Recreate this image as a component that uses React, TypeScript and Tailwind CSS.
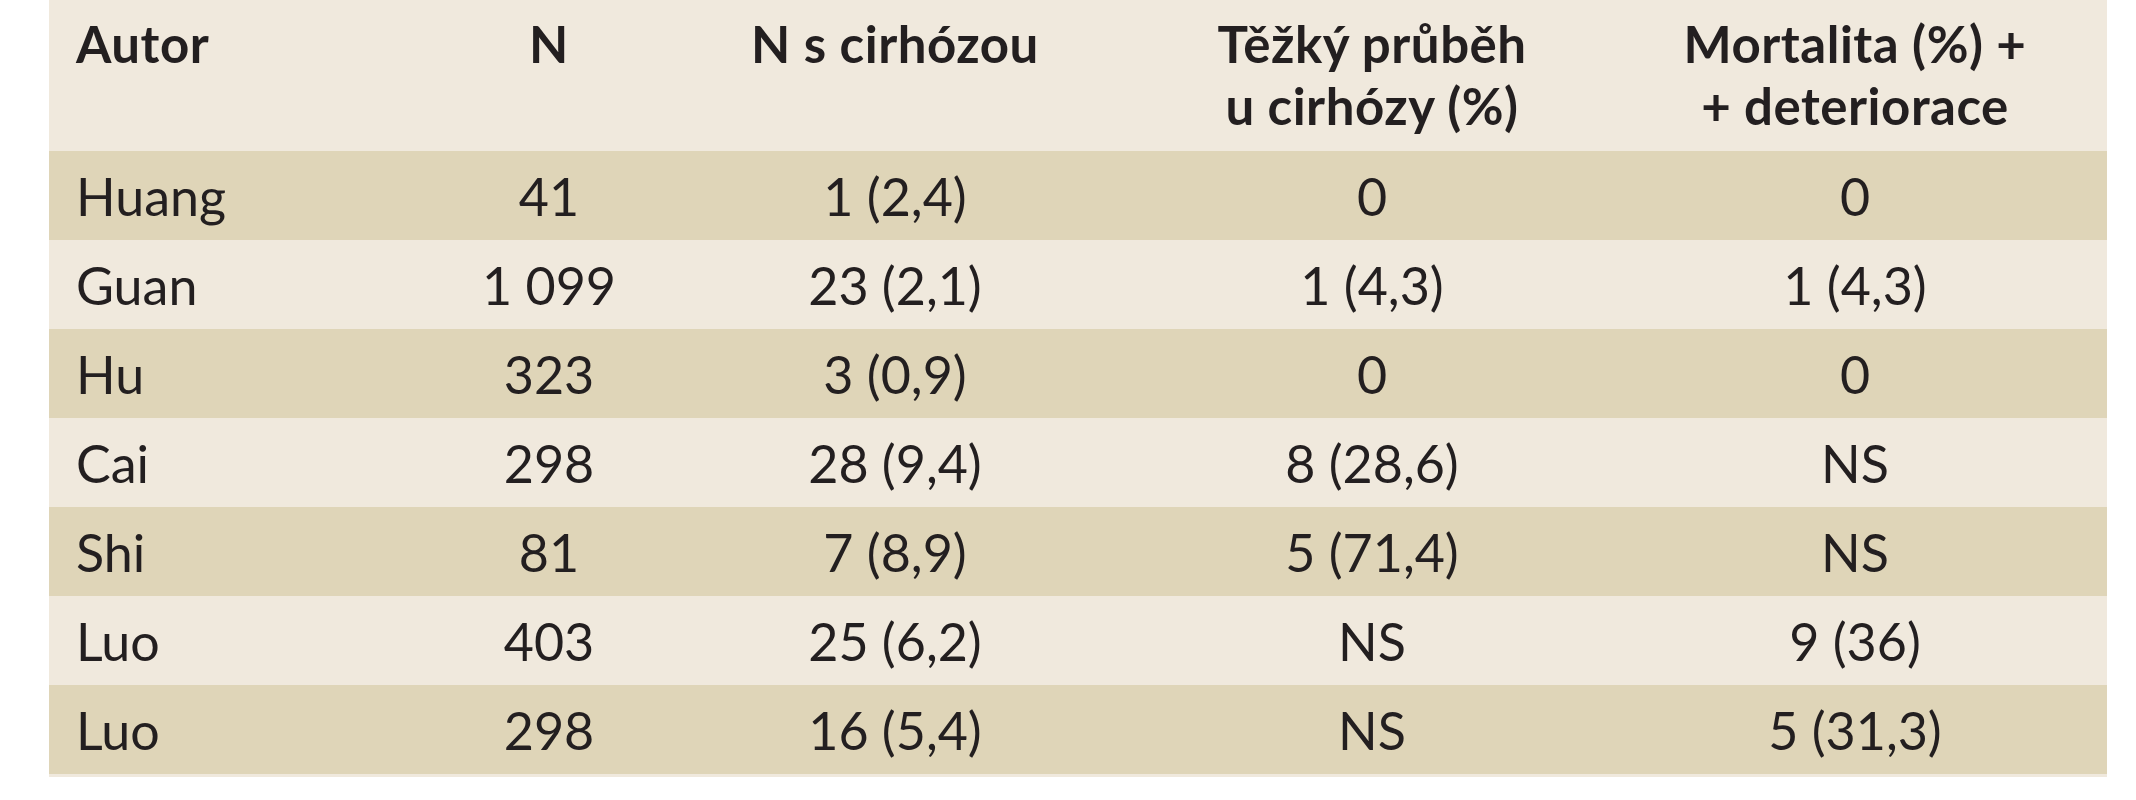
import React from "react";

const rows: string[][] = [
  ["Huang", "41", "1 (2,4)", "0", "0"],
  ["Guan", "1\u00a0099", "23 (2,1)", "1 (4,3)", "1 (4,3)"],
  ["Hu", "323", "3 (0,9)", "0", "0"],
  ["Cai", "298", "28 (9,4)", "8 (28,6)", "NS"],
  ["Shi", "81", "7 (8,9)", "5 (71,4)", "NS"],
  ["Luo", "403", "25 (6,2)", "NS", "9 (36)"],
  ["Luo", "298", "16 (5,4)", "NS", "5 (31,3)"],
];

export default function App() {
  return (
    <div className="w-[2136px] h-[800px] bg-white text-[#231f20] font-['Lato','Open_Sans',sans-serif]">
      <div className="ml-[49px] w-[2058px] bg-[#f0e9dd] pb-[3px]">
        <div className="grid grid-cols-[400px_200px_492px_462px_504px] h-[151px] pt-[13px] font-bold text-[51px] leading-[62px] tracking-[0.01em]">
          <div className="pl-[27px] text-left">Autor</div>
          <div className="text-center">N</div>
          <div className="text-center">N s cirhózou</div>
          <div className="text-center">
            <div>Těžký průběh</div>
            <div>u cirhózy (%)</div>
          </div>
          <div className="text-center">
            <div>Mortalita (%) +</div>
            <div>+ deteriorace</div>
          </div>
        </div>
        {rows.map((r, i) => (
          <div
            key={i}
            className={
              "grid grid-cols-[400px_200px_492px_462px_504px] h-[89px] items-center text-[52px] leading-none " +
              (i % 2 === 0 ? "bg-[#dfd5b8]" : "bg-[#f0e9dd]")
            }
          >
            <div className="pl-[27px] text-left">{r[0]}</div>
            <div className="text-center">{r[1]}</div>
            <div className="text-center">{r[2]}</div>
            <div className="text-center">{r[3]}</div>
            <div className="text-center">{r[4]}</div>
          </div>
        ))}
      </div>
    </div>
  );
}
